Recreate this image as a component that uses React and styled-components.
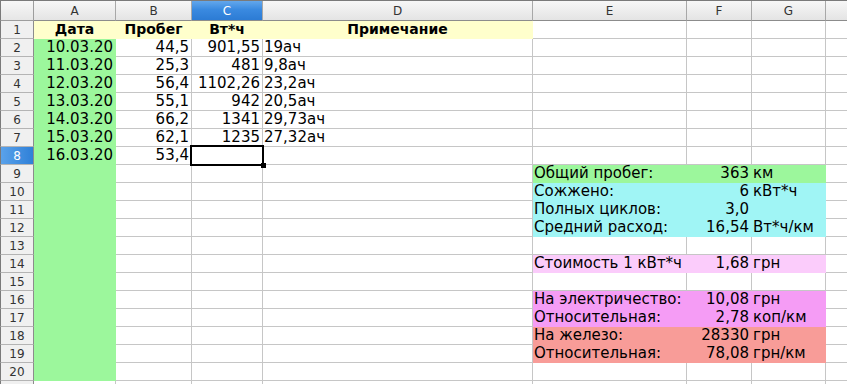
import React from 'react'
import styled, { createGlobalStyle } from 'styled-components'

const GlobalStyle = createGlobalStyle`
    html, body {
        margin: 0;
        padding: 0;
        background: #ffffff;
        overflow: hidden;
    }
`

// last column runs off the right edge, its letter is not visible
const COLS = ['A', 'B', 'C', 'D', 'E', 'F', 'G', '']
const WIDTHS = '34px 82px 76px 71px 270px 154px 65px 74px 60px'

const YELLOW = '#ffffcc'
const GREEN = '#9cf79c'
const CYAN = '#a0f5f5'
const PINK = '#fbccfb'
const MAGENTA = '#f59cf5'
const SALMON = '#f89c98'

const Sheet = styled.div`
    display: grid;
    grid-template-columns: ${WIDTHS};
    grid-auto-rows: 18px;
    grid-template-rows: 20px;
    width: 847px;
    height: 384px;
    overflow: hidden;
    font-family: "DejaVu Sans", Verdana, sans-serif;
    border-top: 1px solid #7a7a7a;
    box-sizing: border-box;
`

const Corner = styled.div`
    box-sizing: border-box;
    background: linear-gradient(#f7f7f7, #e6e6e6);
    border-right: 1px solid #9d9d9d;
    border-bottom: 1px solid #9d9d9d;
    border-left: 1px solid #7a7a7a;
`

const ColHead = styled.div`
    box-sizing: border-box;
    display: flex;
    align-items: center;
    justify-content: center;
    font-size: 12px;
    color: ${p => (p.$active ? '#ffffff' : '#333333')};
    background: ${p => (p.$active
        ? 'linear-gradient(#63a7ec 0%, #3a8ae0 45%, #2c7bd4 100%)'
        : 'linear-gradient(#f7f7f7, #e4e4e4)')};
    border-right: 1px solid #a8a8a8;
    border-bottom: 1px solid #8c8c8c;
`

const RowHead = styled.div`
    box-sizing: border-box;
    display: flex;
    align-items: center;
    justify-content: center;
    font-size: 12px;
    color: ${p => (p.$active ? '#ffffff' : '#333333')};
    background: ${p => (p.$active
        ? 'linear-gradient(90deg, #5aa2ea, #2f80d8)'
        : '#f0f0f0')};
    border-left: 1px solid #7a7a7a;
    border-right: 1px solid #8c8c8c;
    border-bottom: 1px solid #b4b4b4;
`

const Cell = styled.div`
    position: relative;
    box-sizing: border-box;
    padding: 0 ${p => (p.$align === 'right' ? '2px' : '1px')};
    font-size: ${p => (p.$bold ? '14px' : '15px')};
    line-height: 17px;
    white-space: nowrap;
    overflow: visible;
    color: #000000;
    text-align: ${p => p.$align || 'left'};
    font-weight: ${p => (p.$bold ? 700 : 400)};
    background: ${p => p.$bg || '#ffffff'};
    border-right: 1px solid ${p => p.$bg || '#c6c6c6'};
    border-bottom: 1px solid ${p => p.$bg || '#c6c6c6'};
    z-index: ${p => (p.$current ? 2 : p.$spill ? 1 : 0)};
`

const Cursor = styled.div`
    position: absolute;
    left: -2px;
    top: -2px;
    right: -2px;
    bottom: -2px;
    border: 2px solid #000000;
    pointer-events: none;

    &::after {
        content: '';
        position: absolute;
        right: -4px;
        bottom: -4px;
        width: 5px;
        height: 5px;
        background: #000000;
    }
`

const head = (v) => ({ v, align: 'center', bold: true, bg: YELLOW })
const date = (v) => ({ v, align: 'right', bg: GREEN })
const num = (v) => ({ v, align: 'right' })
const note = (v) => ({ v, spill: true })

const summary = (label, value, unit, bg) => [
    { v: label, bg },
    { v: value, align: 'right', bg },
    { v: unit, bg, spill: true },
]

const logRows = [
    ['10.03.20', '44,5', '901,55', '19ач'],
    ['11.03.20', '25,3', '481', '9,8ач'],
    ['12.03.20', '56,4', '1102,26', '23,2ач'],
    ['13.03.20', '55,1', '942', '20,5ач'],
    ['14.03.20', '66,2', '1341', '29,73ач'],
    ['15.03.20', '62,1', '1235', '27,32ач'],
    ['16.03.20', '53,4', '', ''],
]

const sideTable = {
    9: summary('Общий пробег:', '363', 'км', GREEN),
    10: summary('Сожжено:', '6', 'кВт*ч', CYAN),
    11: summary('Полных циклов:', '3,0', '', CYAN),
    12: summary('Средний расход:', '16,54', 'Вт*ч/км', CYAN),
    14: summary('Стоимость 1 кВт*ч', '1,68', 'грн', PINK),
    16: summary('На электричество:', '10,08', 'грн', MAGENTA),
    17: summary('Относительная:', '2,78', 'коп/км', MAGENTA),
    18: summary('На железо:', '28330', 'грн', SALMON),
    19: summary('Относительная:', '78,08', 'грн/км', SALMON),
}

const buildRow = (n) => {
    const cells = Array.from({ length: 8 }, () => ({}))
    if (n === 1) {
        cells[0] = head('Дата')
        cells[1] = head('Пробег')
        cells[2] = head('Вт*ч')
        cells[3] = head('Примечание')
    } else if (n <= 20) {
        cells[0] = { bg: GREEN }
        const log = logRows[n - 2]
        if (log) {
            cells[0] = date(log[0])
            cells[1] = num(log[1])
            cells[2] = num(log[2])
            cells[3] = note(log[3])
        }
    }
    if (sideTable[n]) {
        const [e, f, g] = sideTable[n]
        cells[4] = e
        cells[5] = f
        cells[6] = g
    }
    return cells
}

// row 21 only peeks in at the bottom edge
const ROWS = Array.from({ length: 21 }, (_, i) => i + 1)
const ACTIVE = { row: 8, col: 2 }

const App = () => {
    return (
        <>
            <GlobalStyle />
            <Sheet>
                <Corner />
                {COLS.map((c, i) => (
                    <ColHead key={i} $active={i === ACTIVE.col}>{c}</ColHead>
                ))}
                {ROWS.map(n => (
                    <React.Fragment key={n}>
                        <RowHead $active={n === ACTIVE.row}>{n <= 20 ? n : ''}</RowHead>
                        {buildRow(n).map((cell, i) => {
                            const current = n === ACTIVE.row && i === ACTIVE.col
                            return (
                                <Cell
                                    key={i}
                                    $align={cell.align}
                                    $bold={cell.bold}
                                    $bg={cell.bg}
                                    $spill={cell.spill}
                                    $current={current}
                                >
                                    {cell.v}
                                    {current && <Cursor />}
                                </Cell>
                            )
                        })}
                    </React.Fragment>
                ))}
            </Sheet>
        </>
    )
}

export default App
